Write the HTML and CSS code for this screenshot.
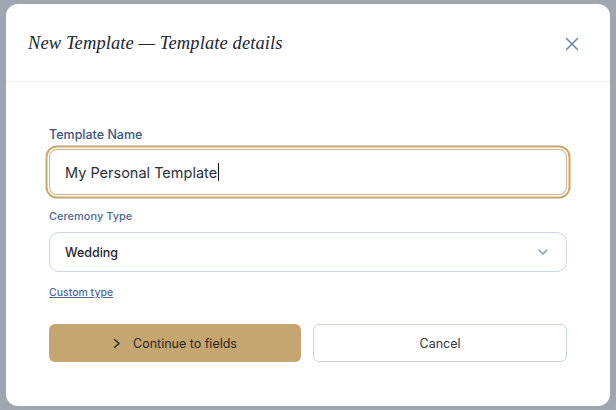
FILE: index.html
```html
<!DOCTYPE html>
<html lang="en">
<head>
<meta charset="utf-8">
<link rel="stylesheet" href="styles.css">
</head>
<body>
<div class="modal">
  <div class="modal-header">
    <h2 class="title">New Template — Template details</h2>
    <button class="close" aria-label="Close">
      <svg width="14" height="14" viewBox="0 0 14 14"><path d="M1.5 1.5L12.5 12.5M12.5 1.5L1.5 12.5" stroke="#6e86aa" stroke-width="1.6" stroke-linecap="round" fill="none"/></svg>
    </button>
  </div>
  <div class="modal-body">
    <label class="label-main">Template Name</label>
    <div class="input-focus">
      <span class="input-text">My Personal Template</span><span class="caret"></span>
    </div>
    <label class="label-sub">Ceremony Type</label>
    <div class="select">
      <span>Wedding</span>
      <svg width="10" height="6" viewBox="0 0 10 6"><path d="M1 1L5 5L9 1" stroke="#7b8fb0" stroke-width="1.3" fill="none" stroke-linecap="round" stroke-linejoin="round"/></svg>
    </div>
    <a class="custom-link" href="#">Custom type</a>
    <div class="actions">
      <button class="btn btn-primary">
        <svg width="8" height="11" viewBox="0 0 8 11"><path d="M1.5 1.5L6 5.5L1.5 9.5" stroke="#2b2b2b" stroke-width="1.5" fill="none" stroke-linecap="round" stroke-linejoin="round"/></svg>
        <span>Continue to fields</span>
      </button>
      <button class="btn btn-secondary">Cancel</button>
    </div>
  </div>
</div>
</body>
</html>
```
FILE: styles.css
```css
* { box-sizing: border-box; }
html, body { margin: 0; padding: 0; }
body {
  width: 616px;
  height: 410px;
  background: #9fa6b0;
  padding: 4px 6px;
  font-family: Inter, "Noto Sans", sans-serif;
}
.modal {
  width: 604px;
  height: 402px;
  background: #ffffff;
  border-radius: 12px;
  display: flex;
  flex-direction: column;
}
.modal-header {
  height: 78px;
  flex: none;
  border-bottom: 1px solid #edf0f3;
  display: flex;
  align-items: center;
  justify-content: space-between;
  padding: 2px 31px 0 22px;
}
.title {
  margin: 0;
  font-family: "Liberation Serif", "DejaVu Serif", serif;
  font-style: italic;
  font-weight: 400;
  font-size: 18.5px;
  color: #222633;
  letter-spacing: 0.1px;
}
.close {
  border: 0;
  background: none;
  padding: 0;
  width: 14px;
  height: 14px;
  display: flex;
}
.modal-body {
  padding: 45px 43px 0 43px;
  display: flex;
  flex-direction: column;
}
.label-main {
  font-size: 12.5px;
  font-weight: 500;
  color: #3c5580;
  line-height: 16px;
  margin-bottom: 6px;
}
.input-focus {
  height: 46px;
  border: 1px solid #d0b581;
  border-radius: 8px;
  box-shadow: 0 0 0 1.5px #ffffff, 0 0 0 3.5px #c8a86e;
  display: flex;
  align-items: center;
  padding-left: 15px;
}
.input-text {
  font-size: 14.5px;
  color: #2a2f3a;
}
.caret {
  width: 1px;
  height: 18px;
  background: #111;
  margin-left: 1px;
}
.label-sub {
  margin-top: 14px;
  font-size: 11px;
  font-weight: 500;
  color: #4c6a98;
  line-height: 14px;
  margin-bottom: 9px;
}
.select {
  height: 40px;
  border: 1px solid #ccd7e7;
  border-radius: 10px;
  display: flex;
  align-items: center;
  justify-content: space-between;
  padding: 0 18px 0 15px;
  font-size: 12.5px;
  font-weight: 500;
  color: #1f2430;
}
.custom-link {
  margin-top: 14px;
  font-size: 10.5px;
  font-weight: 500;
  color: #4c6a98;
  text-decoration: underline;
  line-height: 14px;
  align-self: flex-start;
}
.actions {
  margin-top: 24px;
  display: flex;
  gap: 12px;
}
.btn {
  flex: 1;
  height: 38px;
  border-radius: 6px;
  font-family: Inter, "Noto Sans", sans-serif;
  font-size: 12.5px;
  font-weight: 400;
  display: flex;
  align-items: center;
  justify-content: center;
  gap: 12px;
  cursor: pointer;
}
.btn-primary {
  background: #c5a670;
  border: 0;
  color: #262626;
}
.btn-secondary {
  background: #ffffff;
  border: 1px solid #cbd4e2;
  color: #2f3440;
}
```
